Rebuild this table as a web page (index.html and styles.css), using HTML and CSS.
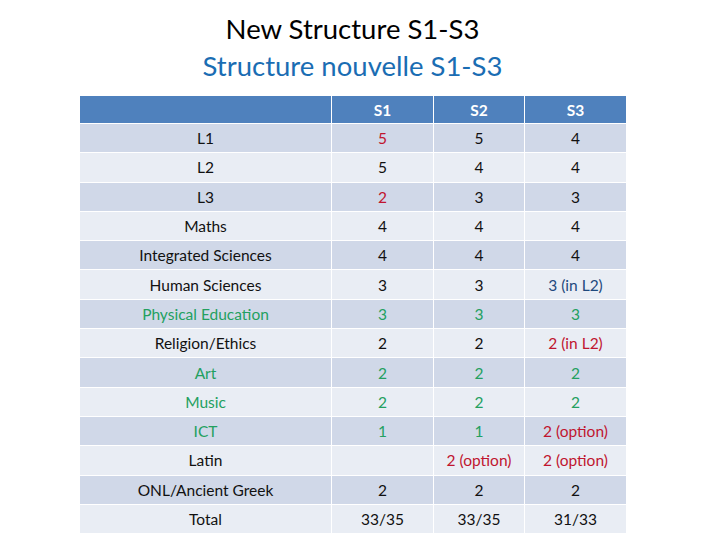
FILE: index.html
```html
<!DOCTYPE html>
<html>
<head>
<meta charset="utf-8">
<link rel="stylesheet" href="styles.css">
</head>
<body>
<div class="page">
  <div class="title">
    <div class="t1">New Structure S1-S3</div>
    <div class="t2">Structure nouvelle S1-S3</div>
  </div>
  <table class="grid">
    <colgroup>
      <col class="c0"><col class="c1"><col class="c2"><col class="c3">
    </colgroup>
    <thead>
      <tr><th></th><th>S1</th><th>S2</th><th>S3</th></tr>
    </thead>
    <tbody>
      <tr class="odd"><td>L1</td><td class="red">5</td><td>5</td><td>4</td></tr>
      <tr class="even"><td>L2</td><td>5</td><td>4</td><td>4</td></tr>
      <tr class="odd"><td>L3</td><td class="red">2</td><td>3</td><td>3</td></tr>
      <tr class="even"><td>Maths</td><td>4</td><td>4</td><td>4</td></tr>
      <tr class="odd"><td>Integrated Sciences</td><td>4</td><td>4</td><td>4</td></tr>
      <tr class="even"><td>Human Sciences</td><td>3</td><td>3</td><td class="blue">3 (in L2)</td></tr>
      <tr class="odd"><td class="green">Physical Education</td><td class="green">3</td><td class="green">3</td><td class="green">3</td></tr>
      <tr class="even"><td>Religion/Ethics</td><td>2</td><td>2</td><td class="red">2 (in L2)</td></tr>
      <tr class="odd"><td class="green">Art</td><td class="green">2</td><td class="green">2</td><td class="green">2</td></tr>
      <tr class="even"><td class="green">Music</td><td class="green">2</td><td class="green">2</td><td class="green">2</td></tr>
      <tr class="odd"><td class="green">ICT</td><td class="green">1</td><td class="green">1</td><td class="red">2 (option)</td></tr>
      <tr class="even"><td>Latin</td><td></td><td class="red">2 (option)</td><td class="red">2 (option)</td></tr>
      <tr class="odd"><td>ONL/Ancient Greek</td><td>2</td><td>2</td><td>2</td></tr>
      <tr class="even"><td>Total</td><td>33/35</td><td>33/35</td><td>31/33</td></tr>
    </tbody>
  </table>
</div>
</body>
</html>
```
FILE: styles.css
```css
html, body {
  margin: 0;
  padding: 0;
  background: #ffffff;
}
.page {
  width: 547px;
  margin-left: 79px;
  font-family: Lato, "Open Sans", sans-serif;
}
.title {
  text-align: center;
  padding-top: 10px;
  height: 95px;
  box-sizing: border-box;
  font-size: 27.5px;
  line-height: 37px;
}
.t1 { color: #000000; }
.t2 { color: #1a6db3; }
.grid {
  width: 547px;
  border-collapse: collapse;
  table-layout: fixed;
  font-size: 15.5px;
  color: #111111;
}
.c0 { width: 252px; }
.c1 { width: 102px; }
.c2 { width: 91px; }
.c3 { width: 102px; }
.grid th, .grid td {
  border: 1px solid #ffffff;
  text-align: center;
  padding: 0;
}
.grid th {
  background: #4f81bd;
  color: #ffffff;
  font-weight: 700;
  height: 27px;
}
.grid td { height: 28.3px; }
.odd td { background: #d0d8e8; }
.even td { background: #e9edf4; }
.grid td.red { color: #c0152f; }
.grid td.green { color: #23a060; }
.grid td.blue { color: #1f497d; }
```
